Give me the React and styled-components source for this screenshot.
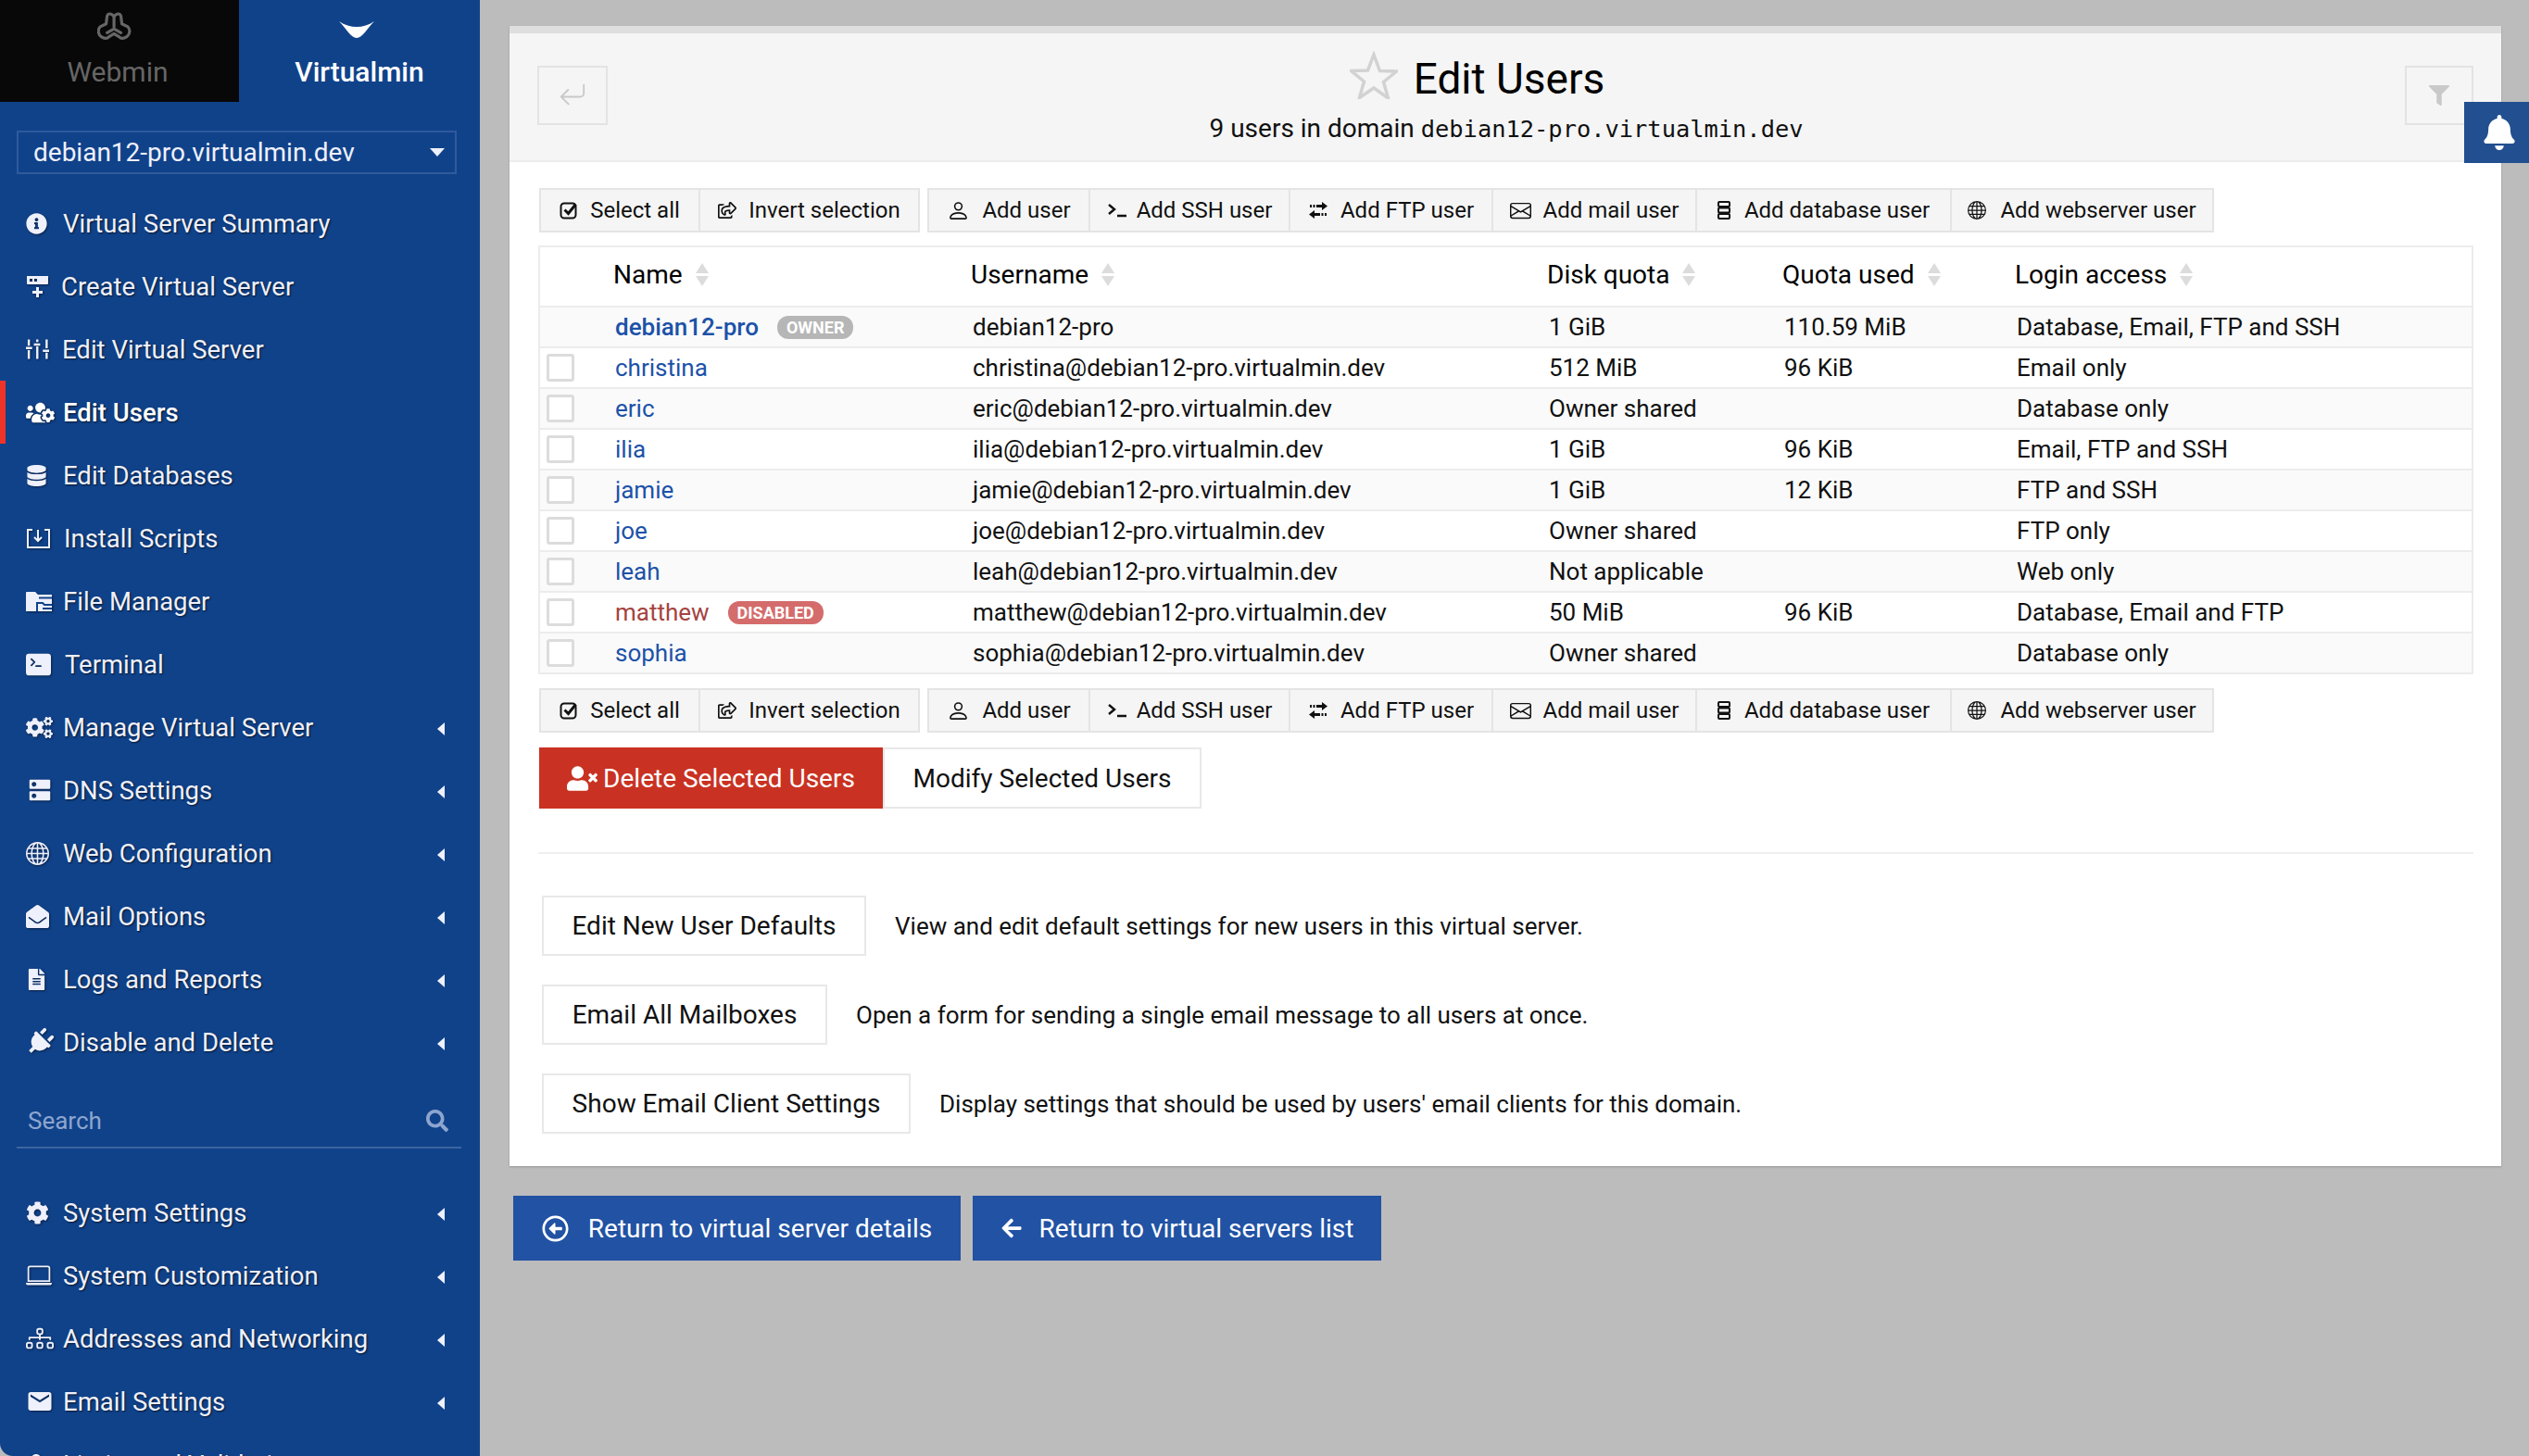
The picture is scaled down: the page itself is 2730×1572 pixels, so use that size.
import React from 'react';
import styled, { createGlobalStyle } from 'styled-components';
import {
  FaInfoCircle, FaUsersCog, FaDatabase, FaCogs, FaEnvelopeOpen, FaFileAlt, FaPlug, FaCog,
  FaSearch, FaRegShareSquare, FaUserTimes, FaFilter, FaBell,
  FaRegArrowAltCircleLeft, FaArrowLeft, FaUser,
} from 'react-icons/fa';
import { BsTerminalFill, BsGlobe, BsLaptop, BsDiagram3, BsEnvelope, BsPerson, BsArrowReturnLeft } from 'react-icons/bs';
import { MdDns, MdEmail } from 'react-icons/md';

const GlobalStyle = createGlobalStyle`
  html, body {
    margin: 0;
    height: 100%;
    background: #bcbcbc;
    overflow: hidden;
    font-family: Roboto, "Liberation Sans", sans-serif;
  }
`;

const Page = styled.div`
  display: flex;
  height: 1572px;
  overflow: hidden;
`;

/* sidebar */
const Sidebar = styled.nav`
  width: 518px;
  flex: none;
  height: 100%;
  overflow: hidden;
  background: #10428a;
  color: #eef0fb;
  border-bottom-left-radius: 14px;
`;

const Tabs = styled.div`
  display: flex;
  height: 110px;
`;

const Tab = styled.div`
  width: ${(p) => (p.$active ? 260 : 258)}px;
  box-sizing: border-box;
  padding-right: ${(p) => (p.$active ? 0 : 4)}px;
  display: flex;
  flex-direction: column;
  align-items: center;
  background: ${(p) => (p.$active ? 'transparent' : '#080808')};
  color: ${(p) => (p.$active ? '#fff' : '#666')};
  font-size: 30px;
  font-weight: ${(p) => (p.$active ? 500 : 400)};
`;

const TabLogo = styled.svg`
  height: 34px;
  margin: 13px 7px 13px 0;
`;

const DomainSelect = styled.div`
  margin: 31px 25px 19px 18px;
  height: 47px;
  box-sizing: border-box;
  border: 2px solid #2f5a9c;
  display: flex;
  align-items: center;
  justify-content: space-between;
  padding: 0 11px 0 16px;
  font-size: 28px;
`;

const Caret = styled.span`
  width: 0;
  height: 0;
  border-left: 8px solid transparent;
  border-right: 8px solid transparent;
  border-top: 9px solid #eef0fb;
`;

const MenuRow = styled.div`
  height: 68px;
  display: flex;
  align-items: center;
  padding: 0 38px 0 28px;
  font-size: 27.5px;
  font-weight: ${(p) => (p.$active ? 500 : 400)};
  color: ${(p) => (p.$active ? '#fff' : '#eef0fb')};
  box-shadow: ${(p) => (p.$active ? 'inset 6px 0 0 #f03328' : 'none')};
  text-shadow: 1px 1px 2px rgba(0, 0, 0, 0.7);
`;

const MenuIcon = styled.span`
  width: ${(p) => p.$slot || 40}px;
  flex: none;
  display: flex;
  align-items: center;
  filter: drop-shadow(1px 1px 1px rgba(0, 0, 0, 0.5));
`;

const MenuLabel = styled.span`
  flex: 1;
  white-space: nowrap;
`;

const SubArrow = styled.span`
  width: 0;
  height: 0;
  margin-top: 4px;
  border-top: 7px solid transparent;
  border-bottom: 7px solid transparent;
  border-right: 8px solid #eef0fb;
`;

const SearchBox = styled.div`
  margin: 25px 20px 35px 18px;
  height: 56px;
  box-sizing: border-box;
  border-bottom: 2px solid #3d659f;
  display: flex;
  align-items: center;
  justify-content: space-between;
  padding: 0 14px 2px 12px;
  color: #8ea6cf;
  font-size: 26px;
`;

/* main */
const Main = styled.main`
  flex: 1;
  min-width: 0;
  padding: 28px 30px 0 32px;
`;

const Panel = styled.section`
  background: #fff;
  border-top: 8px solid #dedede;
  box-shadow: 0 1px 2px rgba(0, 0, 0, 0.2);
`;

const PanelHeader = styled.header`
  height: 137px;
  background: #f5f5f5;
  border-bottom: 2px solid #ececec;
  display: flex;
  align-items: flex-start;
  justify-content: space-between;
  padding: 0 30px;
`;

const GhostButton = styled.div`
  width: ${(p) => p.$w}px;
  height: 64px;
  margin-top: 35px;
  box-sizing: border-box;
  border: 2px solid #e3e3e3;
  display: flex;
  align-items: center;
  justify-content: center;
  color: #c9c9c9;
`;

const TitleBlock = styled.div`
  text-align: center;
`;

const TitleRow = styled.div`
  display: flex;
  align-items: center;
  justify-content: center;
  height: 70px;
  margin: 14px 0 3px;
  padding-right: 63px;
  gap: 17px;
  font-size: 46px;
  color: #000;
`;

const StarIcon = styled.svg`
  margin-top: -8px;
  color: #d2d2d2;
`;

const Subtitle = styled.div`
  font-size: 28px;
  color: #111;
  line-height: 32px;
`;

const Mono = styled.span`
  font-family: "DejaVu Sans Mono", "Liberation Mono", monospace;
  font-size: 25.4px;
`;

const NotifyTab = styled.div`
  position: fixed;
  top: 110px;
  right: 0;
  width: 70px;
  height: 66px;
  box-sizing: border-box;
  padding-left: 6px;
  background: #224f90;
  color: #fff;
  display: flex;
  align-items: center;
  justify-content: center;
  font-size: 38px;
`;

const PanelBody = styled.div`
  padding: 28px 30px 35px 31px;
`;

const Toolbar = styled.div`
  display: flex;
  gap: 8px;
  margin: ${(p) => p.$margin};
`;

const ToolGroup = styled.div`
  display: flex;
  height: 48px;
  box-sizing: border-box;
  border: 2px solid #e4e4e4;
  background: #f5f5f5;
`;

const ToolButton = styled.div`
  width: ${(p) => p.$w}px;
  box-sizing: border-box;
  display: flex;
  align-items: center;
  justify-content: center;
  gap: ${(p) => p.$gap || 13}px;
  font-size: 24px;
  color: #111;
  white-space: nowrap;
  & + & { border-left: 2px solid #e4e4e4; }
  svg { flex: none; font-size: 20px; }
`;

const Table = styled.table`
  width: 2089px;
  table-layout: fixed;
  border-collapse: separate;
  border-spacing: 0;
  border: 2px solid #ececec;
  border-bottom-width: 0;
  margin-top: 14px;
  box-sizing: border-box;
  font-size: 26px;
  color: #111;
`;

const HeadCell = styled.th`
  height: 65px;
  padding: 0 0 5px;
  box-sizing: border-box;
  text-align: left;
  font-weight: 400;
  font-size: 28px;
  color: #000;
  border-bottom: 2px solid #ececec;
`;

const HeadInner = styled.span`
  display: inline-flex;
  align-items: center;
  gap: 14px;
`;

const Row = styled.tr`
  background: ${(p) => (p.$odd ? '#fafafa' : '#fff')};
`;

const Cell = styled.td`
  height: 42px;
  padding: 0 0 0 2px;
  border-bottom: 2px solid #ececec;
  white-space: nowrap;
`;

const Check = styled.div`
  width: 30px;
  height: 30px;
  box-sizing: border-box;
  margin-left: 5px;
  background: #fff;
  border: 3px solid #dcdcdc;
  border-radius: 3px;
`;

const NameLink = styled.span`
  color: ${(p) => (p.$disabled ? '#a5433f' : '#1c52a8')};
  font-weight: ${(p) => (p.$bold ? 500 : 400)};
`;

const Badge = styled.span`
  display: inline-block;
  margin-left: 20px;
  padding: 0 10px;
  height: 25px;
  line-height: 25px;
  vertical-align: 2px;
  border-radius: 12px;
  background: ${(p) => (p.$red ? '#d46c6c' : '#b6b6b6')};
  color: #fff;
  font-size: 18px;
  font-weight: 700;
`;

const ActionRow = styled.div`
  display: flex;
  margin: 16px 0 0 1px;
`;

const ActionButton = styled.div`
  height: 66px;
  width: ${(p) => p.$w}px;
  box-sizing: border-box;
  display: flex;
  align-items: center;
  justify-content: center;
  gap: 6px;
  font-size: 28px;
  background: ${(p) => (p.$danger ? '#c93222' : '#fff')};
  color: ${(p) => (p.$danger ? '#fff' : '#111')};
  border: ${(p) => (p.$danger ? 'none' : '2px solid #e8e8e8')};
  svg { font-size: 33px; }
`;

const Divider = styled.hr`
  border: 0;
  height: 2px;
  background: #f0f0f0;
  margin: 47px 0 45px;
`;

const LinkList = styled.div`
  display: flex;
  flex-direction: column;
  gap: 31px;
  padding-left: 4px;
`;

const LinkRow = styled.div`
  display: flex;
  align-items: center;
  gap: 31px;
  font-size: 26px;
  color: #111;
`;

const OutlineButton = styled.div`
  height: 65px;
  width: ${(p) => p.$w}px;
  box-sizing: border-box;
  border: 2px solid #e8e8e8;
  display: flex;
  align-items: center;
  justify-content: center;
  font-size: 28px;
  white-space: nowrap;
`;

const ReturnBar = styled.div`
  display: flex;
  gap: 13px;
  margin: 32px 0 0 4px;
`;

const ReturnButton = styled.div`
  height: 70px;
  width: ${(p) => p.$w}px;
  box-sizing: border-box;
  background: #2152a3;
  color: #fff;
  display: flex;
  align-items: center;
  justify-content: center;
  gap: ${(p) => p.$gap}px;
  font-size: 28px;
  white-space: nowrap;
`;

/* hand drawn icons the packages don't have */
const WebminLogo = () => (
  <TabLogo viewBox="0 0 34 32" fill="none" stroke="#666" strokeWidth="3" strokeLinejoin="round" strokeLinecap="round">
    <path d="M17 5C15 1 11 1 10 4L9 12 3 15C0 18 1 23 4 25 7 27 10 27 12 25L17 22 22 25C24 27 27 27 30 25 33 23 34 18 31 15L25 12 24 4C23 1 19 1 17 5ZM17 5V15M10 21L17 17 24 21" />
  </TabLogo>
);

const VirtualminLogo = () => (
  <TabLogo viewBox="0 0 38 34" fill="#fff">
    <path d="M0 10C12 18 26 18 38 10 31 17 25 28 19 28 13 28 7 17 0 10Z" />
  </TabLogo>
);

const ServerPlus = () => (
  <svg width="25" height="26" viewBox="0 0 25 26" fill="currentColor">
    <path d="M1 2h23a1 1 0 0 1 0 1v7a1 1 0 0 1-1 1H2a1 1 0 0 1-1-1zM4 5v3h3V5zm5 0v3h3V5z" fillRule="evenodd" />
    <path d="M11 14h3v4h4v3h-4v4h-3v-4H7v-3h4z" />
  </svg>
);

const SlidersV = () => (
  <svg width="25" height="22" viewBox="0 0 26 22" fill="currentColor">
    <path d="M2 0h2.500v7H2zM2 12h2.500v10H2zM11.500 0H14v3h-2.500zM11.500 8H14v14h-2.500zM22 0h2.500v10H22zM22 15h2.500v7H22zM0 8.500h7V11H0zM9 4.500h7V7H9zM19 11.500h7V14h-7z" />
  </svg>
);

const InstallBox = () => (
  <svg width="26" height="22" viewBox="0 0 26 22" fill="none" stroke="currentColor" strokeWidth="2">
    <path d="M7 2H2v19h23V2h-5M13 2v11M9 10l4 4 4-4" />
  </svg>
);

const FolderShare = () => (
  <svg width="28" height="22" viewBox="0 0 28 22">
    <path fill="currentColor" d="M0 2q0-1 1-1h9l3 3h15v18H0z" />
    <path fill="none" stroke="#10428a" strokeWidth="2" d="M14 7.500h14M12 22v-9h6l2 2h8M18 19h10" />
  </svg>
);

const SshPrompt = () => (
  <svg width="22" height="18" viewBox="0 0 22 18" fill="none" stroke="currentColor" strokeWidth="2.400">
    <path d="M2 3l6 5-6 5M11 15h10" />
  </svg>
);

const Transfer = () => (
  <svg width="22" height="20" viewBox="0 0 22 20" fill="currentColor">
    <path d="M15 1l6 4.500-6 4.500V7H9V4h6zM2 4h2v3H2zM5.500 4h2v3h-2zM7 10v3h6v3H7v3L1 14.500zM14.500 13h2v3h-2zM18 13h2v3h-2z" />
  </svg>
);

const DbStack = () => (
  <svg width="14" height="20" viewBox="0 0 14 20" fill="none" stroke="currentColor" strokeWidth="2">
    <rect x="1" y="1" width="12" height="5" rx="1" />
    <rect x="1" y="7.500" width="12" height="5" rx="1" />
    <rect x="1" y="14" width="12" height="5" rx="1" />
  </svg>
);

const CheckBoxIcon = () => (
  <svg width="20" height="20" viewBox="0 0 20 20">
    <rect x="1.500" y="2.500" width="16" height="16" rx="3.500" fill="none" stroke="currentColor" strokeWidth="2" />
    <path d="M5.500 9.500l4 4 8-10" fill="none" stroke="currentColor" strokeWidth="3" />
  </svg>
);

const Star = () => (
  <StarIcon width="52" height="52" viewBox="0 0 52 52" fill="none" stroke="currentColor" strokeWidth="3.500" strokeLinejoin="miter">
    <path d="M26 4l6.500 17.500 18 .5-14 11.500 5 17.500L26 40 10.500 50.500l5-17.500-14-11.500 18-.5z" />
  </StarIcon>
);

const Sort = () => (
  <svg width="14" height="25" viewBox="0 0 14 25" fill="#dcdcdc">
    <path d="M7 0l7 11H0zM0 14h14L7 25z" />
  </svg>
);

const topMenu = [
  { label: 'Virtual Server Summary', icon: <FaInfoCircle size={23} /> },
  { label: 'Create Virtual Server', icon: <ServerPlus />, slot: 38 },
  { label: 'Edit Virtual Server', icon: <SlidersV />, slot: 39 },
  { label: 'Edit Users', icon: <FaUsersCog size={31} />, active: true },
  { label: 'Edit Databases', icon: <FaDatabase size={23} /> },
  { label: 'Install Scripts', icon: <InstallBox />, slot: 41 },
  { label: 'File Manager', icon: <FolderShare /> },
  { label: 'Terminal', icon: <BsTerminalFill size={27} />, slot: 42 },
  { label: 'Manage Virtual Server', icon: <FaCogs size={29} />, sub: true },
  { label: 'DNS Settings', icon: <MdDns size={30} />, sub: true },
  { label: 'Web Configuration', icon: <BsGlobe size={25} />, sub: true },
  { label: 'Mail Options', icon: <FaEnvelopeOpen size={25} />, sub: true },
  { label: 'Logs and Reports', icon: <FaFileAlt size={23} />, sub: true },
  { label: 'Disable and Delete', icon: <FaPlug size={30} style={{ transform: 'rotate(45deg)' }} />, sub: true },
];

const bottomMenu = [
  { label: 'System Settings', icon: <FaCog size={25} />, sub: true },
  { label: 'System Customization', icon: <BsLaptop size={28} />, sub: true },
  { label: 'Addresses and Networking', icon: <BsDiagram3 size={30} />, sub: true },
  { label: 'Email Settings', icon: <MdEmail size={30} />, sub: true },
  { label: 'Limits and Validation', icon: <FaUser size={22} />, sub: true },
];

const selectTools = [
  { label: 'Select all', w: 170, icon: <CheckBoxIcon /> },
  { label: 'Invert selection', w: 237, icon: <FaRegShareSquare /> },
];

const addTools = [
  { label: 'Add user', w: 172, icon: <BsPerson style={{ fontSize: 25 }} /> },
  { label: 'Add SSH user', w: 216, gap: 10, icon: <SshPrompt /> },
  { label: 'Add FTP user', w: 219, icon: <Transfer /> },
  { label: 'Add mail user', w: 220, icon: <BsEnvelope style={{ fontSize: 23 }} /> },
  { label: 'Add database user', w: 275, gap: 15, icon: <DbStack /> },
  { label: 'Add webserver user', w: 283, gap: 15, icon: <BsGlobe /> },
];

const users = [
  { name: 'debian12-pro', badge: 'OWNER', login: 'debian12-pro', quota: '1 GiB', used: '110.59 MiB', access: 'Database, Email, FTP and SSH', owner: true },
  { name: 'christina', login: 'christina@debian12-pro.virtualmin.dev', quota: '512 MiB', used: '96 KiB', access: 'Email only' },
  { name: 'eric', login: 'eric@debian12-pro.virtualmin.dev', quota: 'Owner shared', used: '', access: 'Database only' },
  { name: 'ilia', login: 'ilia@debian12-pro.virtualmin.dev', quota: '1 GiB', used: '96 KiB', access: 'Email, FTP and SSH' },
  { name: 'jamie', login: 'jamie@debian12-pro.virtualmin.dev', quota: '1 GiB', used: '12 KiB', access: 'FTP and SSH' },
  { name: 'joe', login: 'joe@debian12-pro.virtualmin.dev', quota: 'Owner shared', used: '', access: 'FTP only' },
  { name: 'leah', login: 'leah@debian12-pro.virtualmin.dev', quota: 'Not applicable', used: '', access: 'Web only' },
  { name: 'matthew', badge: 'DISABLED', login: 'matthew@debian12-pro.virtualmin.dev', quota: '50 MiB', used: '96 KiB', access: 'Database, Email and FTP', disabled: true },
  { name: 'sophia', login: 'sophia@debian12-pro.virtualmin.dev', quota: 'Owner shared', used: '', access: 'Database only' },
];

const links = [
  { label: 'Edit New User Defaults', w: 350, text: 'View and edit default settings for new users in this virtual server.' },
  { label: 'Email All Mailboxes', w: 308, text: 'Open a form for sending a single email message to all users at once.' },
  { label: 'Show Email Client Settings', w: 398, text: "Display settings that should be used by users' email clients for this domain." },
];

const MenuItems = ({ items }) =>
  items.map((item) => (
    <MenuRow key={item.label} $active={item.active}>
      <MenuIcon $slot={item.slot}>{item.icon}</MenuIcon>
      <MenuLabel>{item.label}</MenuLabel>
      {item.sub && <SubArrow />}
    </MenuRow>
  ));

const ToolGroupRow = ({ items }) => (
  <ToolGroup>
    {items.map((t) => (
      <ToolButton key={t.label} $w={t.w} $gap={t.gap}>
        {t.icon}
        {t.label}
      </ToolButton>
    ))}
  </ToolGroup>
);

const Tools = ({ margin }) => (
  <Toolbar $margin={margin}>
    <ToolGroupRow items={selectTools} />
    <ToolGroupRow items={addTools} />
  </Toolbar>
);

const App = () => {
  return (
    <Page>
      <GlobalStyle />
      <Sidebar>
        <Tabs>
          <Tab>
            <WebminLogo />
            Webmin
          </Tab>
          <Tab $active>
            <VirtualminLogo />
            Virtualmin
          </Tab>
        </Tabs>
        <DomainSelect>
          debian12-pro.virtualmin.dev
          <Caret />
        </DomainSelect>
        <MenuItems items={topMenu} />
        <SearchBox>
          Search
          <FaSearch size={24} />
        </SearchBox>
        <MenuItems items={bottomMenu} />
      </Sidebar>

      <Main>
        <Panel>
          <PanelHeader>
            <GhostButton $w={76}>
              <BsArrowReturnLeft size={30} />
            </GhostButton>
            <TitleBlock>
              <TitleRow>
                <Star />
                Edit Users
              </TitleRow>
              <Subtitle>
                9 users in domain <Mono>debian12-pro.virtualmin.dev</Mono>
              </Subtitle>
            </TitleBlock>
            <GhostButton $w={74}>
              <FaFilter size={22} />
            </GhostButton>
          </PanelHeader>

          <PanelBody>
            <Tools margin="0 0 0 1px" />
            <Table>
              <colgroup>
                <col width="79" />
                <col width="386" />
                <col width="622" />
                <col width="254" />
                <col width="251" />
                <col />
              </colgroup>
              <thead>
                <tr>
                  <HeadCell />
                  {['Name', 'Username', 'Disk quota', 'Quota used', 'Login access'].map((h) => (
                    <HeadCell key={h}>
                      <HeadInner>
                        {h}
                        <Sort />
                      </HeadInner>
                    </HeadCell>
                  ))}
                </tr>
              </thead>
              <tbody>
                {users.map((u, i) => (
                  <Row key={u.name} $odd={i % 2 === 0}>
                    <Cell>{!u.owner && <Check />}</Cell>
                    <Cell>
                      <NameLink $bold={u.owner} $disabled={u.disabled}>
                        {u.name}
                      </NameLink>
                      {u.badge && <Badge $red={u.disabled}>{u.badge}</Badge>}
                    </Cell>
                    <Cell>{u.login}</Cell>
                    <Cell>{u.quota}</Cell>
                    <Cell>{u.used}</Cell>
                    <Cell>{u.access}</Cell>
                  </Row>
                ))}
              </tbody>
            </Table>
            <Tools margin="15px 0 0 1px" />
            <ActionRow>
              <ActionButton $danger $w={371}>
                <FaUserTimes />
                Delete Selected Users
              </ActionButton>
              <ActionButton $w={344}>Modify Selected Users</ActionButton>
            </ActionRow>
            <Divider />
            <LinkList>
              {links.map((l) => (
                <LinkRow key={l.label}>
                  <OutlineButton $w={l.w}>{l.label}</OutlineButton>
                  {l.text}
                </LinkRow>
              ))}
            </LinkList>
          </PanelBody>
        </Panel>

        <ReturnBar>
          <ReturnButton $w={483} $gap={21}>
            <FaRegArrowAltCircleLeft size={29} />
            Return to virtual server details
          </ReturnButton>
          <ReturnButton $w={441} $gap={18}>
            <FaArrowLeft size={24} />
            Return to virtual servers list
          </ReturnButton>
        </ReturnBar>
      </Main>

      <NotifyTab>
        <FaBell />
      </NotifyTab>
    </Page>
  );
};

export default App;
